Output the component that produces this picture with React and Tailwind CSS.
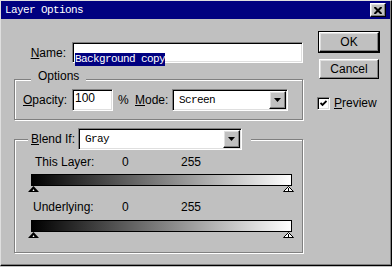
const sans = "font-['Liberation_Sans',Arial,sans-serif] text-[12px] leading-[14px] text-black"
const mono = "font-['Liberation_Mono','Courier_New',monospace] text-[11px] leading-[13px] tracking-[-0.6px]"

const raised =
  'border border-t-white border-l-white border-r-black border-b-black shadow-[inset_-1px_-1px_0_#808080,inset_1px_1px_0_#dfdfdf] bg-[#c0c0c0]'
const sunken =
  'border border-t-[#808080] border-l-[#808080] border-r-white border-b-white shadow-[inset_1px_1px_0_#000,inset_-1px_-1px_0_#dfdfdf] bg-white'
const etched = 'border border-[#808080] shadow-[inset_1px_1px_0_#fff,1px_1px_0_#fff]'

function DropButton() {
  return (
    <div className={`w-[17px] h-[18px] flex items-center justify-center ${raised}`}>
      <svg width="7" height="4" viewBox="0 0 7 4">
        <path d="M0 0 H7 L3.5 4 Z" fill="#000" />
      </svg>
    </div>
  )
}

function Combo({ width, value }) {
  return (
    <div className={`h-[22px] flex items-center pl-[6px] pr-[1px] ${sunken} ${width}`}>
      <span className={`flex-1 ${mono}`}>{value}</span>
      <DropButton />
    </div>
  )
}

function Triangles() {
  return (
    <div className="ml-[13px] w-[266px] h-[6px] flex justify-between">
      <svg width="11" height="6" viewBox="0 0 11 6">
        <path d="M5.5 0 L11 6 H0 Z" fill="#000" />
        <path d="M5.5 3 L6.5 5 H4.5 Z" fill="#fff" />
      </svg>
      <svg width="11" height="6" viewBox="0 0 11 6">
        <path d="M5.5 0.5 L10.5 5.5 H0.5 Z" fill="#fff" stroke="#000" strokeWidth="1" />
        <path d="M5.5 2 V5.5" stroke="#000" strokeWidth="1" />
      </svg>
    </div>
  )
}

function Bar() {
  return (
    <div className="ml-[16px] w-[261px] h-[12px] border border-black bg-[linear-gradient(to_right,#000,#fff)]" />
  )
}

export default function App() {
  return (
    <div className="w-[392px] h-[267px] bg-[#c0c0c0]">
      <div className="w-[392px] h-[266px] flex flex-col border border-t-[#dfdfdf] border-l-[#dfdfdf] border-r-black border-b-black shadow-[inset_-1px_-1px_0_#808080] bg-[#c0c0c0]">
        {/* title bar */}
        <div className="h-[18px] mr-[1px] bg-[#000080] flex items-center justify-between pl-[4px] pr-[4px]">
          <span className={`${mono} text-white`}>Layer Options</span>
          <div className={`w-[16px] h-[14px] flex items-center justify-center ${raised}`}>
            <svg width="8" height="7" viewBox="0 0 8 7">
              <path d="M0.5 0 L7.5 7 M7.5 0 L0.5 7" stroke="#000" strokeWidth="2" />
            </svg>
          </div>
        </div>

        <div className="flex items-start pl-[13px]">
          {/* left column */}
          <div className="w-[289px] flex flex-col pt-[23px]">
            {/* name */}
            <div className="flex items-center h-[21px]">
              <span className={`w-[58px] pr-[6px] text-right ${sans}`}>
                <u>N</u>ame:
              </span>
              <div className={`flex-1 h-[21px] pl-[2px] pt-[1px] ${sunken}`}>
                <span className={`inline-block bg-[#000080] text-white ${mono}`}>Background copy</span>
              </div>
            </div>

            {/* options */}
            <div className={`mt-[16px] h-[41px] flex flex-col ${etched}`}>
              <div className={`-mt-[11px] ml-[16px] px-[7px] self-start bg-[#c0c0c0] ${sans}`}>Options</div>
              <div className="mt-[6px] flex items-center pl-[8px] h-[22px]">
                <span className={`w-[49px] ${sans}`}>
                  <u>O</u>pacity:
                </span>
                <div className={`w-[41px] h-[22px] pl-[2px] pt-[1px] ${sunken} ${sans}`}>100</div>
                <span className={`ml-[5px] w-[17px] ${sans}`}>%</span>
                <span className={`w-[37px] ${sans}`}>
                  <u>M</u>ode:
                </span>
                <Combo width="w-[116px]" value="Screen" />
              </div>
            </div>

            {/* blend if */}
            <div className={`mt-[19px] h-[114px] flex flex-col ${etched}`}>
              <div className="-mt-[12px] ml-[13px] pl-[3px] pr-[9px] self-start h-[22px] flex items-center bg-[#c0c0c0]">
                <span className={`w-[47px] ${sans}`}>
                  <u>B</u>lend If:
                </span>
                <Combo width="w-[164px]" value="Gray" />
              </div>

              <div className={`mt-[5px] h-[14px] pl-[20px] flex ${sans}`}>
                <span className="w-[87px]">This Layer:</span>
                <span className="w-[59px]">0</span>
                <span>255</span>
              </div>
              <div className="mt-[5px]">
                <Bar />
              </div>
              <Triangles />

              <div className={`mt-[8px] h-[14px] pl-[18px] flex ${sans}`}>
                <span className="w-[89px]">Underlying:</span>
                <span className="w-[59px]">0</span>
                <span>255</span>
              </div>
              <div className="mt-[6px]">
                <Bar />
              </div>
              <Triangles />
            </div>
          </div>

          {/* right column */}
          <div className="ml-[15px] pt-[12px] flex flex-col">
            <div className="w-[62px] h-[22px] border border-black">
              <div className={`w-full h-full flex items-center justify-center ${raised} ${sans}`}>OK</div>
            </div>
            <div className={`mt-[6px] ml-[1px] w-[60px] h-[20px] flex items-center justify-center ${raised} ${sans}`}>
              Cancel
            </div>
            <div className="mt-[17px] -ml-[1px] flex items-center">
              <div className={`w-[13px] h-[13px] flex items-center justify-center ${sunken}`}>
                <svg width="7" height="7" viewBox="0 0 7 7">
                  <path d="M0.5 3 L2.5 5 L6.5 1" fill="none" stroke="#000" strokeWidth="1.8" />
                </svg>
              </div>
              <span className={`ml-[4px] ${sans}`}>
                <u>P</u>review
              </span>
            </div>
          </div>
        </div>
      </div>
    </div>
  )
}
